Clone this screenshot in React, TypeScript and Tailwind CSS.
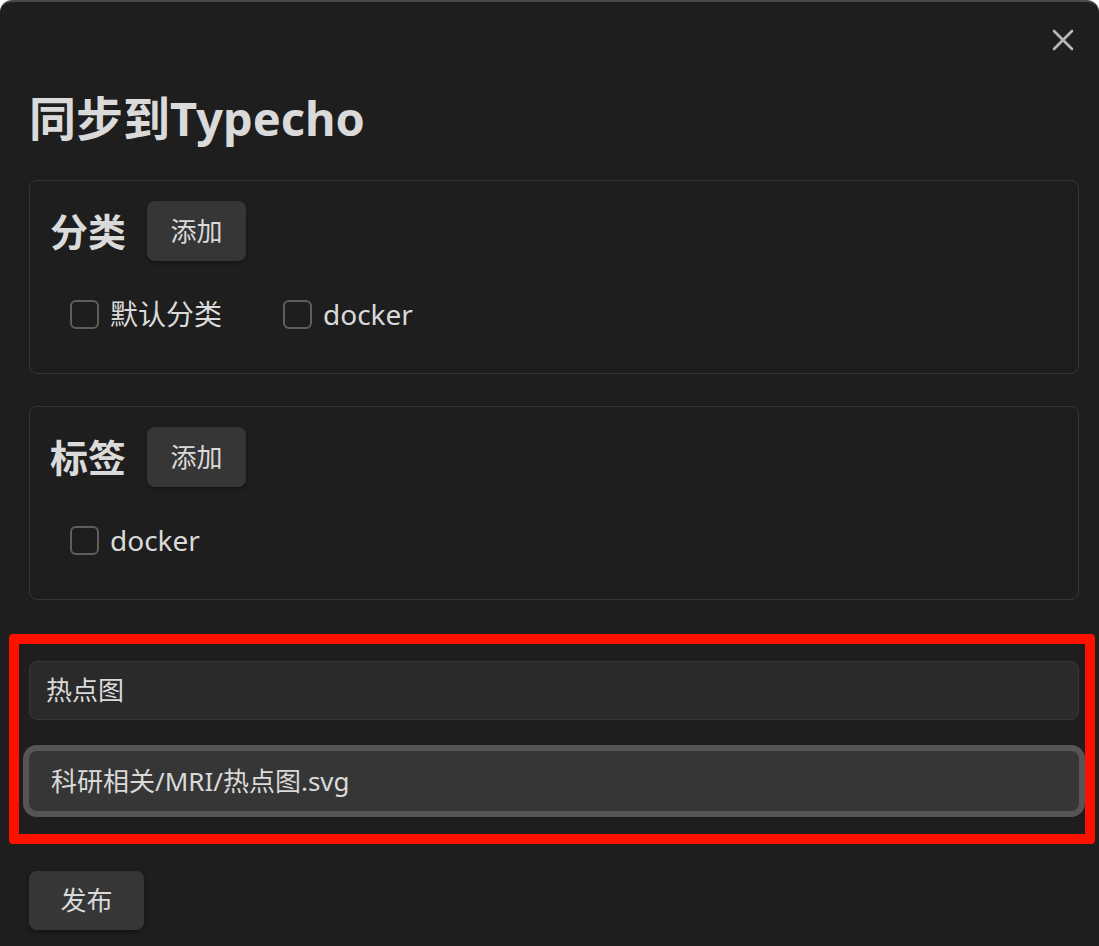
import React from "react";

const font = { fontFamily: "'Noto Sans', 'Noto Sans CJK SC', sans-serif" };

function Check({ label }: { label: string }) {
  return (
    <label className="flex items-center gap-[11px]">
      <span className="block w-[29px] h-[29px] rounded-[6px] border-2 border-[#5e5e5e] bg-[#1e1e1e]" />
      <span className="text-[28px] leading-none text-[#dadada]">{label}</span>
    </label>
  );
}

function Section({ title, items }: { title: string; items: string[] }) {
  return (
    <div className="border border-[#363636] rounded-[8px] pl-[20px] pr-[20px] pt-[20px] pb-[44px]">
      <div className="flex items-center gap-[21px] h-[60px]">
        <h2 className="text-[38px] font-bold leading-none text-[#dadada]">{title}</h2>
        <button className="h-[60px] w-[99px] rounded-[8px] bg-[#363636] text-[26px] text-[#dadada] shadow-[0_2px_4px_rgba(0,0,0,0.35)]">
          添加
        </button>
      </div>
      <div className="mt-[38px] h-[30px] pl-[20px] flex items-center gap-[61px]">
        {items.map((it) => (
          <Check key={it} label={it} />
        ))}
      </div>
    </div>
  );
}

export default function App() {
  return (
    <div
      style={font}
      className="relative min-h-[946px] w-full bg-[#1e1e1e] border-t-2 border-[#4a4a4a] rounded-t-[12px] pl-[29px] pr-[20px] overflow-hidden"
    >
      <button className="absolute right-[25px] top-[27px] w-[22px] h-[22px]" aria-label="close">
        <svg width="22" height="22" viewBox="0 0 22 22" fill="none" stroke="#b8b8b8" strokeWidth="2.6" strokeLinecap="round">
          <path d="M2 2 L20 20" />
          <path d="M20 2 L2 20" />
        </svg>
      </button>

      <h1 className="pt-[93px] text-[47px] leading-[47px] font-bold text-[#dadada]">同步到Typecho</h1>

      <div className="mt-[38px]">
        <Section title="分类" items={["默认分类", "docker"]} />
      </div>
      <div className="mt-[32px]">
        <Section title="标签" items={["docker"]} />
      </div>

      <div className="relative mt-[61px]">
        <div className="h-[59px] rounded-[8px] border border-[#363636] bg-[#2a2a2a] flex items-center px-[16px] text-[26px] text-[#dadada]">
          热点图
        </div>
        <div className="mt-[31px] h-[60px] rounded-[8px] bg-[#363636] ring-[6px] ring-[#555555] flex items-center px-[22px] text-[26px] text-[#dadada]">
          科研相关/MRI/热点图.svg
        </div>
        <div className="pointer-events-none absolute -top-[27px] -left-[20px] -right-[16px] -bottom-[33px] border-[10px] border-[#ff1100] rounded-[4px]" />
      </div>

      <button className="mt-[60px] h-[59px] w-[115px] rounded-[8px] bg-[#363636] text-[26px] text-[#dadada] shadow-[0_2px_4px_rgba(0,0,0,0.35)]">
        发布
      </button>
    </div>
  );
}
